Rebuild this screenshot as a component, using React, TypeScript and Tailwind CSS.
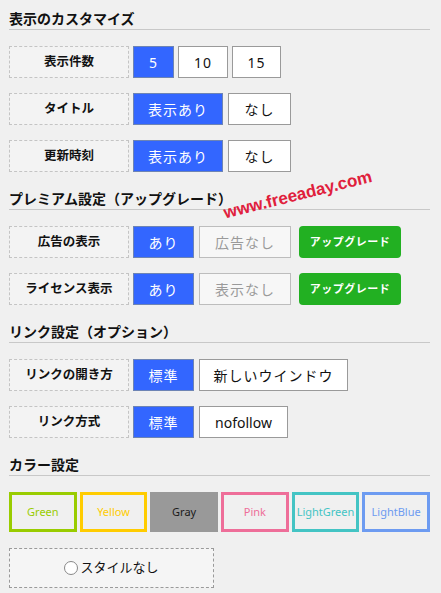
import React from "react";

const font = { fontFamily: '"Noto Sans", "Noto Sans CJK JP", sans-serif' };

function Heading({ children }: { children: React.ReactNode }) {
  return (
    <div className="mb-[16px] border-b border-[#c8c8c8] pt-[4px] pb-[2px] text-[14px] font-bold leading-[16px] text-[#111]">
      {children}
    </div>
  );
}

function Label({ children }: { children: React.ReactNode }) {
  return (
    <div className="flex h-[32px] w-[120px] shrink-0 items-center justify-center border border-dashed border-[#c4c4c4] bg-[#f3f3f3] text-[12.5px] font-bold text-[#111]">
      {children}
    </div>
  );
}

function Btn({ children, w, kind }: { children: React.ReactNode; w: string; kind: "on" | "off" | "dis" }) {
  const cls =
    kind === "on"
      ? "bg-[#3366ff] border-[#6d84b4] text-white"
      : kind === "off"
      ? "bg-white border-[#9a9a9a] text-[#111]"
      : "bg-[#f7f7f7] border-[#bdbdbd] text-[#9a9a9a]";
  return (
    <div className={`flex h-[32px] items-center justify-center border text-[14px] tracking-[1px] ${cls} ${w}`}>
      {children}
    </div>
  );
}

function Upgrade() {
  return (
    <div className="ml-[4px] flex h-[32px] w-[102px] items-center justify-center rounded-[4px] bg-[#22b022] text-[11px] font-bold tracking-[0.5px] text-white">
      アップグレード
    </div>
  );
}

function Row({ children }: { children: React.ReactNode }) {
  return <div className="mb-[15px] flex gap-[4px]">{children}</div>;
}

const colors = [
  { name: "Green", cls: "border-[#99cc00] text-[#99cc00]" },
  { name: "Yellow", cls: "border-[#ffcc00] text-[#ffcc00]" },
  { name: "Gray", cls: "border-[#999999] bg-[#999999] text-[#1a1a1a]" },
  { name: "Pink", cls: "border-[#ee6e99] text-[#ee6e99]" },
  { name: "LightGreen", cls: "border-[#44c4c4] text-[#44c4c4]" },
  { name: "LightBlue", cls: "border-[#6d9bf1] text-[#6d9bf1]" },
];

export default function App() {
  return (
    <div className="relative min-h-[593px] w-[441px] overflow-hidden bg-[#f0f0f0] pl-[9px] pr-[11px] pt-[7px]" style={font}>
      <Heading>表示のカスタマイズ</Heading>
      <Row>
        <Label>表示件数</Label>
        <Btn w="w-[41px]" kind="on">5</Btn>
        <Btn w="w-[50px]" kind="off">10</Btn>
        <Btn w="w-[49px]" kind="off">15</Btn>
      </Row>
      <Row>
        <Label>タイトル</Label>
        <Btn w="w-[90px]" kind="on">表示あり</Btn>
        <Btn w="w-[63px] ml-[1px]" kind="off">なし</Btn>
      </Row>
      <Row>
        <Label>更新時刻</Label>
        <Btn w="w-[90px]" kind="on">表示あり</Btn>
        <Btn w="w-[63px] ml-[1px]" kind="off">なし</Btn>
      </Row>

      <Heading>プレミアム設定（アップグレード）</Heading>
      <Row>
        <Label>広告の表示</Label>
        <Btn w="w-[61px]" kind="on">あり</Btn>
        <Btn w="w-[92px] ml-[1px]" kind="dis">広告なし</Btn>
        <Upgrade />
      </Row>
      <Row>
        <Label>ライセンス表示</Label>
        <Btn w="w-[61px]" kind="on">あり</Btn>
        <Btn w="w-[92px] ml-[1px]" kind="dis">表示なし</Btn>
        <Upgrade />
      </Row>

      <Heading>リンク設定（オプション）</Heading>
      <Row>
        <Label>リンクの開き方</Label>
        <Btn w="w-[61px]" kind="on">標準</Btn>
        <Btn w="w-[149px] ml-[1px]" kind="off">新しいウインドウ</Btn>
      </Row>
      <Row>
        <Label>リンク方式</Label>
        <Btn w="w-[61px]" kind="on">標準</Btn>
        <Btn w="w-[89px] ml-[1px]" kind="off">
          <span className="tracking-normal">nofollow</span>
        </Btn>
      </Row>

      <Heading>カラー設定</Heading>
      <div className="mb-[16px] grid grid-cols-6 gap-[3px]">
        {colors.map((c) => (
          <div
            key={c.name}
            className={`flex h-[40px] items-center justify-center border-[3px] text-[11px] ${c.cls}`}
          >
            {c.name}
          </div>
        ))}
      </div>
      <div className="flex h-[40px] w-[205px] items-center justify-center border border-dashed border-[#9a9a9a] bg-[#f5f5f5] text-[13px] text-[#111]">
        <span className="mr-[2px] inline-block h-[14px] w-[14px] rounded-full border border-[#888] bg-white" />
        スタイルなし
      </div>

      <div
        className="pointer-events-none absolute left-[221px] top-[201px] -rotate-[14deg] text-[17px] font-bold text-[#e0203c]"
        style={{ fontFamily: '"Liberation Sans", Arial, sans-serif', transformOrigin: "left top" }}
      >
        www.freeaday.com
      </div>
    </div>
  );
}
